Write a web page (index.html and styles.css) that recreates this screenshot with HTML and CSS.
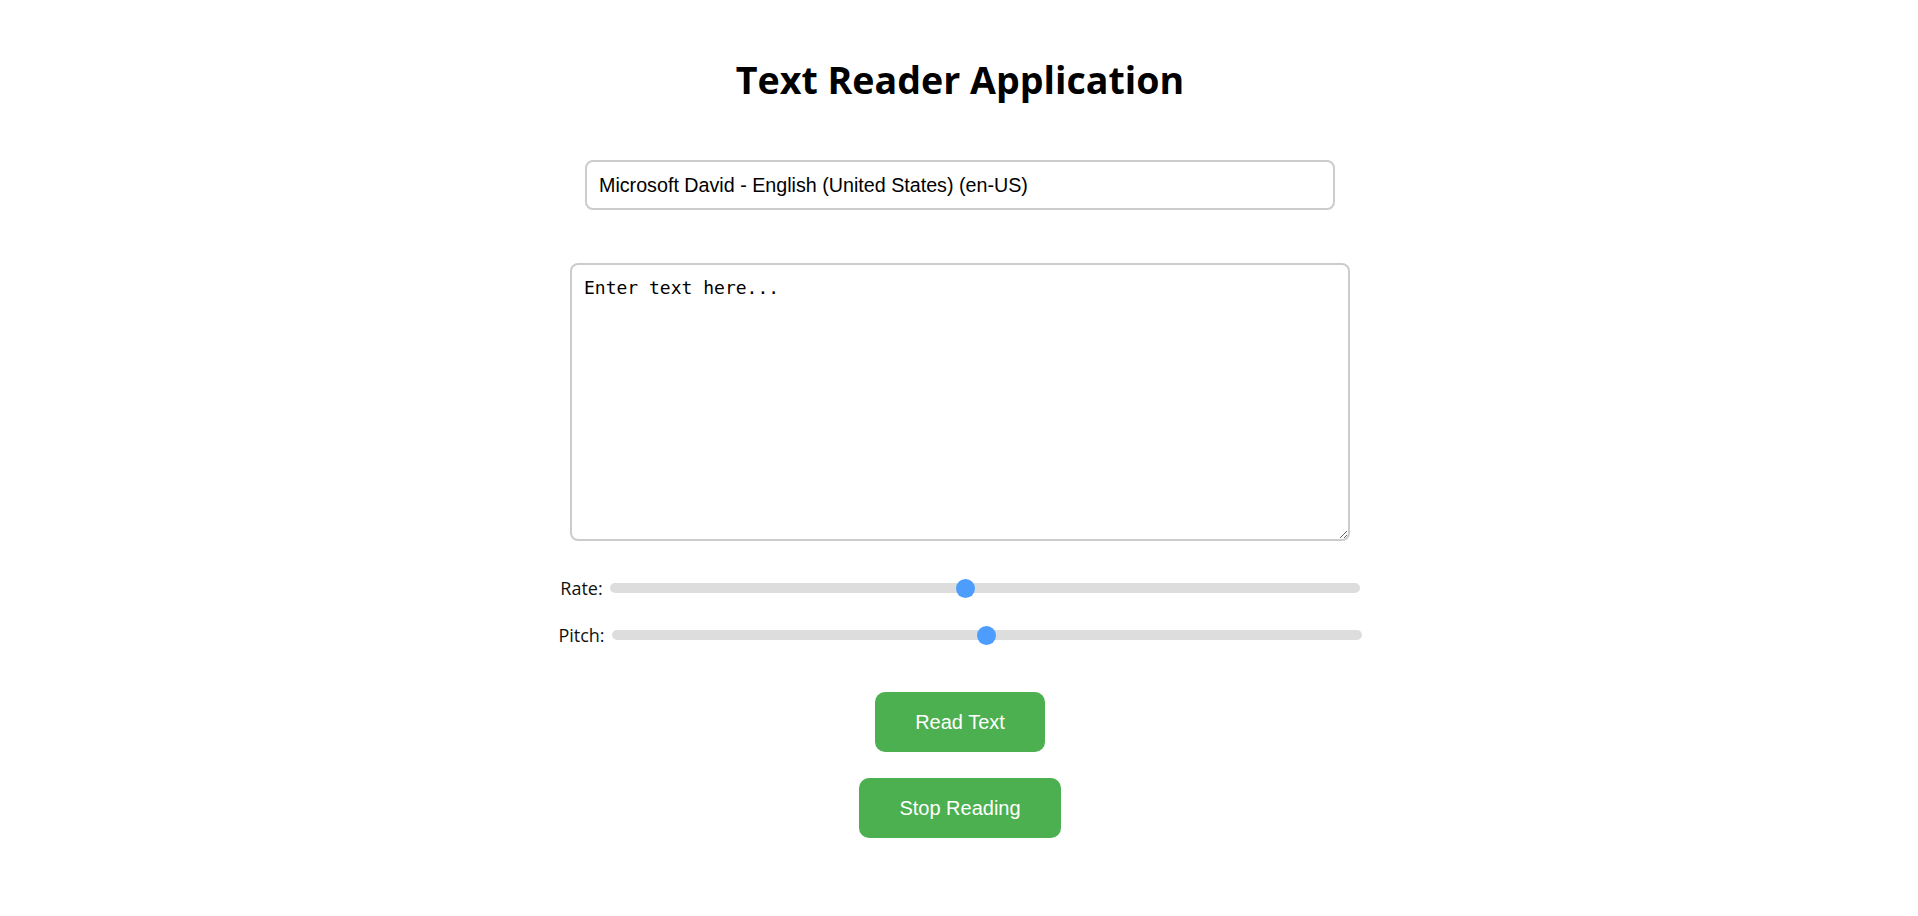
FILE: index.html
```html
<!DOCTYPE html>
<html lang="en">
<head>
<meta charset="utf-8">
<title>Text Reader Application</title>
<link rel="stylesheet" href="styles.css">
</head>
<body>
<div class="app">
  <h1 class="title">Text Reader Application</h1>
  <select class="voice-select">
    <option>Microsoft David - English (United States) (en-US)</option>
  </select>
  <textarea class="text-input" placeholder="Enter text here..."></textarea>
  <div class="control-row">
    <label class="control-label" for="rate">Rate:</label>
    <input class="slider" id="rate" type="range" min="0.1" max="2" step="0.1" value="1">
  </div>
  <div class="control-row">
    <label class="control-label" for="pitch">Pitch:</label>
    <input class="slider" id="pitch" type="range" min="0" max="2" step="0.1" value="1">
  </div>
  <button class="btn">Read Text</button>
  <button class="btn">Stop Reading</button>
</div>
</body>
</html>
```

FILE: styles.css
```css
html, body {
  margin: 0;
  padding: 0;
  background: #ffffff;
}

body {
  font-family: "Open Sans", "Noto Sans", sans-serif;
  color: #000;
}

.app {
  display: flex;
  flex-direction: column;
  align-items: center;
  padding-top: 53px;
  padding-left: 2px;
}

.title {
  margin: 0;
  font-size: 37.6px;
  line-height: 54px;
  font-weight: 700;
}

.voice-select {
  -webkit-appearance: none;
  appearance: none;
  margin-top: 53px;
  width: 750px;
  height: 50px;
  box-sizing: border-box;
  padding: 0 12px;
  border: 2px solid #cccccc;
  border-radius: 8px;
  background: #fff;
  font-family: "Liberation Sans", Arial, sans-serif;
  font-size: 19.7px;
  color: #000;
}

.text-input {
  margin-top: 53px;
  width: 752px;
  height: 250px;
  padding: 12px;
  border: 2px solid #cccccc;
  border-radius: 8px;
  font-family: "DejaVu Sans Mono", "Liberation Mono", monospace;
  font-size: 18px;
  color: #000;
  resize: both;
}

.text-input::placeholder {
  color: #000;
  opacity: 1;
}

.control-row {
  display: flex;
  align-items: center;
  gap: 7px;
  height: 24px;
}

.text-input + .control-row {
  margin-top: 35px;
}

.control-row + .control-row {
  margin-top: 23px;
}

.control-label {
  font-size: 18px;
  color: #111;
}

.slider {
  -webkit-appearance: none;
  appearance: none;
  margin: 0;
  width: 750px;
  height: 10px;
  border-radius: 5px;
  background: #dddddd;
  outline: none;
}

.slider::-webkit-slider-thumb {
  -webkit-appearance: none;
  appearance: none;
  width: 19px;
  height: 19px;
  border-radius: 50%;
  background: #4d9dff;
  border: none;
}

.btn {
  margin-top: 45px;
  padding: 18px 40px;
  border: none;
  border-radius: 10px;
  background: #4caf50;
  color: #fff;
  font-family: "Liberation Sans", Arial, sans-serif;
  font-size: 20px;
  line-height: 24px;
}

.btn + .btn {
  margin-top: 26px;
}
```
